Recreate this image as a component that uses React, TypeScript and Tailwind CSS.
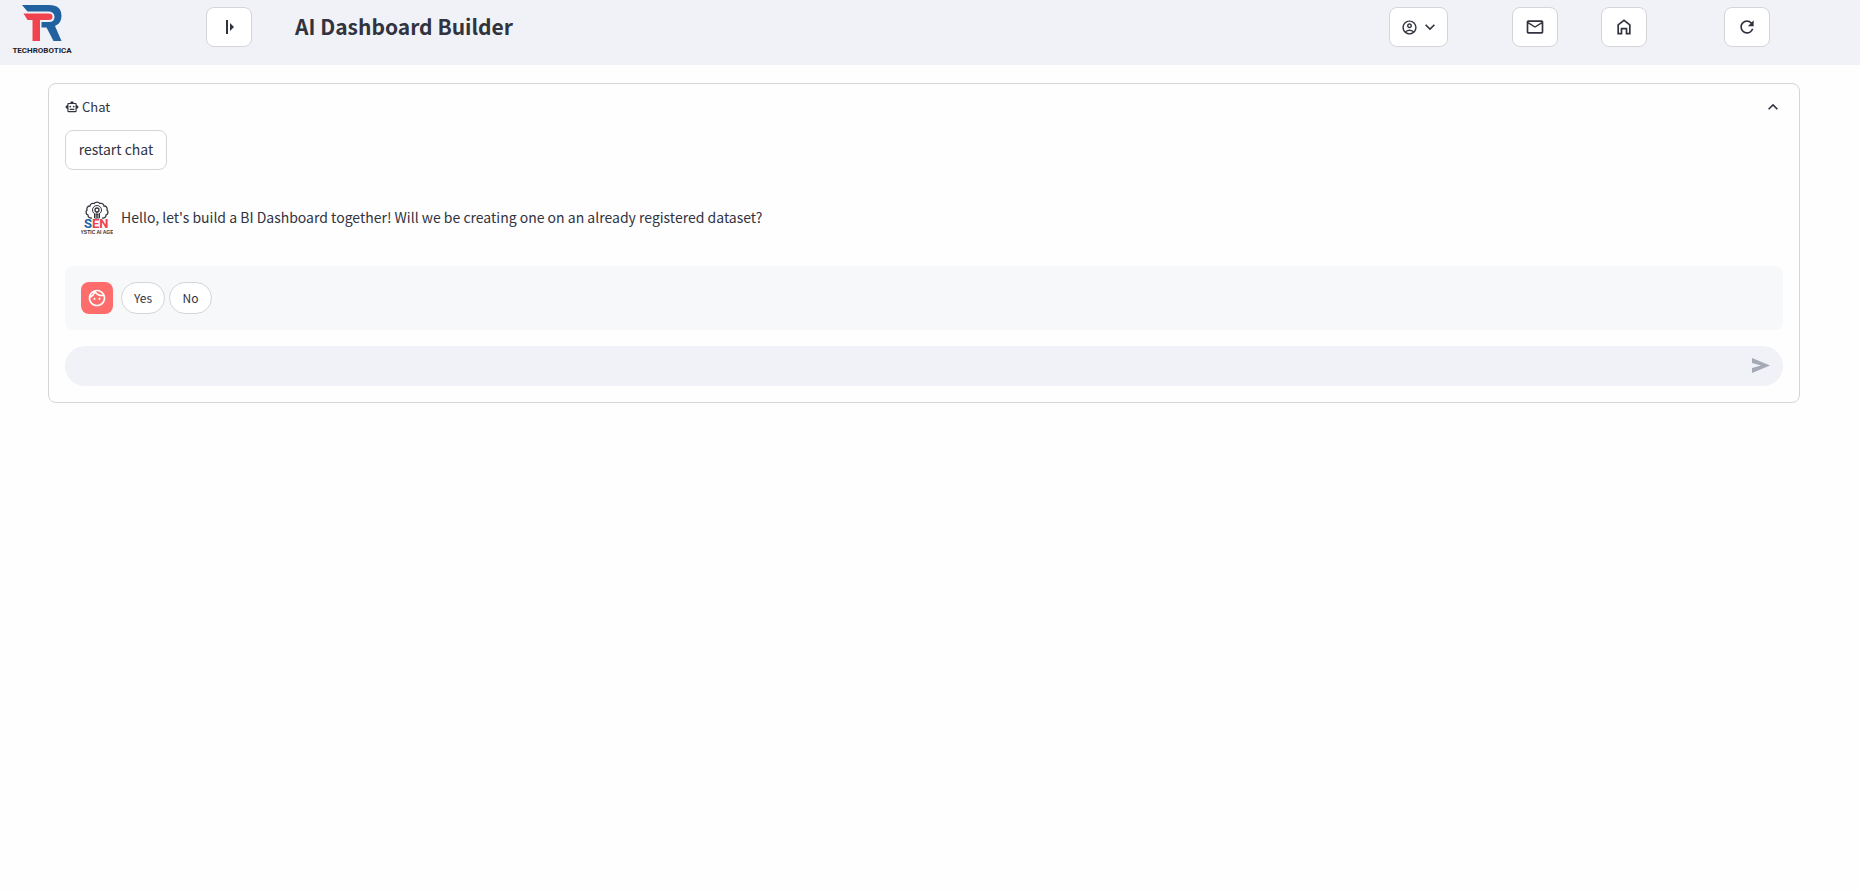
import React, { useState } from 'react';
import { MdOutlineAccountCircle, MdKeyboardArrowDown, MdKeyboardArrowUp, MdOutlineMail, MdRefresh, MdOutlineSmartToy, MdOutlineFace } from 'react-icons/md';

const headerButton = 'flex h-10 w-[46px] items-center justify-center rounded-lg border border-[#d4d5d8] bg-white hover:border-[#ff4b4b] hover:text-[#ff4b4b]';

function BrandLogo() {
    return (
        <svg width="64" height="50" viewBox="0 0 64 50" role="img" aria-label="Techrobotica">
            <path d="M10 0H37Q49.500 0 49.500 11Q49.500 18.500 43 21L49.500 36H41.500L34.500 22.500H29.500V17H37Q42.500 17 42.500 12Q42.500 6.500 36 6.500H15.500Z" fill="#22619f" />
            <path d="M11.500 8.500H36.500Q40.500 8.500 40.500 11.700T36.500 15H28V36H20.500V15H15.500Z" fill="#f0434f" />
            <text x="30" y="48" textAnchor="middle" fontSize="8" fontWeight="700" fontFamily="Roboto, sans-serif" fill="#1c1c28">TECHROBOTICA</text>
        </svg>
    );
}

function StartIcon() {
    return (
        <svg width="20" height="20" viewBox="0 0 20 20" fill="currentColor" aria-hidden="true">
            <path d="M7 3h2v14H7zM11 6l4 4-4 4z" />
        </svg>
    );
}

function HomeIcon() {
    return (
        <svg width="20" height="20" viewBox="0 0 24 24" fill="none" stroke="currentColor" strokeWidth="2" aria-hidden="true">
            <path d="M5 20V9.500L12 4l7 5.500V20h-4v-6H9v6z" />
        </svg>
    );
}

function SendIcon() {
    return (
        <svg width="20" height="18" viewBox="0 0 20 18" fill="currentColor" aria-hidden="true">
            <path d="M1 1l18 7.500L1 16v-5l9-2.500L1 6z" />
        </svg>
    );
}

function AgentAvatar() {
    return (
        <svg width="32" height="34" viewBox="0 0 32 34" fill="none" className="shrink-0" role="img" aria-label="Agent">
            <g stroke="#33343d" strokeWidth="1">
                <path d="M11 17a3 3 0 0 1-4-3a3 3 0 0 1-1-5a3 3 0 0 1 3-4a3 3 0 0 1 4-2.500a4 4 0 0 1 6 0a3 3 0 0 1 4 2.500a3 3 0 0 1 3 4a3 3 0 0 1-1 5a3 3 0 0 1-4 3" strokeWidth="1.300" />
                <circle cx="16" cy="9" r="4.500" />
                <circle cx="16" cy="9" r="2" strokeWidth="1.300" />
                <path d="M13.500 13v4h5v-4M16 11v6M13.500 15h5" />
            </g>
            <text x="3" y="27" fontSize="13" fontWeight="700" fontFamily="Roboto, sans-serif" fill="#22619f">S</text>
            <text x="11" y="27" fontSize="13" fontWeight="700" fontFamily="Roboto, sans-serif" fill="#f0434f">EN</text>
            <text x="16" y="33" textAnchor="middle" fontSize="5" fontWeight="700" fontFamily="'Liberation Sans', sans-serif" fill="#33343d">YSTIC AI AGE</text>
        </svg>
    );
}

export default function App() {
    const [open, setOpen] = useState(true);
    const [message, setMessage] = useState('');

    return (
        <div className="min-h-screen bg-[#fefefe] font-['Noto_Sans_CJK_JP','Noto_Sans',sans-serif] text-[#31333f]">
            {/* Top bar */}
            <header className="grid h-[65px] grid-cols-[206fr_89fr_1094fr_123fr_89fr_123fr_136fr] bg-[#f0f2f7] pt-[7px]">
                <div className="-mt-[2px] pl-3">
                    <BrandLogo />
                </div>
                <div>
                    <button className={headerButton} aria-label="Open sidebar"><StartIcon /></button>
                </div>
                <h1 className="text-[21px] leading-[38px] font-bold">AI Dashboard Builder</h1>
                <div>
                    <button className="flex h-10 w-[59px] items-center justify-center gap-[2px] rounded-lg border border-[#d4d5d8] bg-white pl-1" aria-label="Account">
                        <MdOutlineAccountCircle size={17} />
                        <MdKeyboardArrowDown size={20} />
                    </button>
                </div>
                <div>
                    <button className={headerButton} aria-label="Mail"><MdOutlineMail size={20} /></button>
                </div>
                <div>
                    <button className={headerButton} aria-label="Home"><HomeIcon /></button>
                </div>
                <div>
                    <button className={headerButton} aria-label="Refresh"><MdRefresh size={20} /></button>
                </div>
            </header>

            {/* Chat */}
            <main className="pt-[18px] pr-[60px] pl-12">
                <section className="rounded-lg border border-[#d4d5d8] px-4">
                    <button className="flex h-[46px] w-full items-center justify-between" aria-expanded={open} onClick={() => setOpen(!open)}>
                        <span className="flex items-center gap-[3px] text-[13px]">
                            <MdOutlineSmartToy size={14} />
                            Chat
                        </span>
                        <MdKeyboardArrowUp size={20} className={open ? '' : 'rotate-180'} />
                    </button>

                    {open && (
                        <div className="flex flex-col gap-4 pb-4">
                            <button className="h-10 w-[102px] self-start rounded-lg border border-[#d4d5d8] bg-white pb-[2px] text-sm">restart chat</button>

                            <div className="flex h-16 items-center gap-2 px-4">
                                <AgentAvatar />
                                <p className="pb-[2px] text-sm">Hello, let's build a BI Dashboard together! Will we be creating one on an already registered dataset?</p>
                            </div>

                            <div className="flex items-center gap-2 rounded-lg bg-[#f7f8fa] p-4">
                                <div className="flex size-8 items-center justify-center rounded-lg bg-[#ff6c6c] text-white">
                                    <MdOutlineFace size={20} />
                                </div>
                                <div className="flex gap-1">
                                    <button className="h-8 w-11 rounded-full border border-[#d4d5d8] bg-white text-xs">Yes</button>
                                    <button className="h-8 w-[43px] rounded-full border border-[#d4d5d8] bg-white text-xs">No</button>
                                </div>
                            </div>

                            <form className="flex h-10 items-center rounded-full bg-[#f0f2f7] pr-3 pl-4" onSubmit={(e) => e.preventDefault()}>
                                <input
                                    className="min-w-0 flex-1 bg-transparent text-sm outline-none"
                                    aria-label="Message"
                                    value={message}
                                    onChange={(e) => setMessage(e.target.value)}
                                />
                                <button className="text-[#a5a9b6]" aria-label="Send"><SendIcon /></button>
                            </form>
                        </div>
                    )}
                </section>
            </main>
        </div>
    );
}
